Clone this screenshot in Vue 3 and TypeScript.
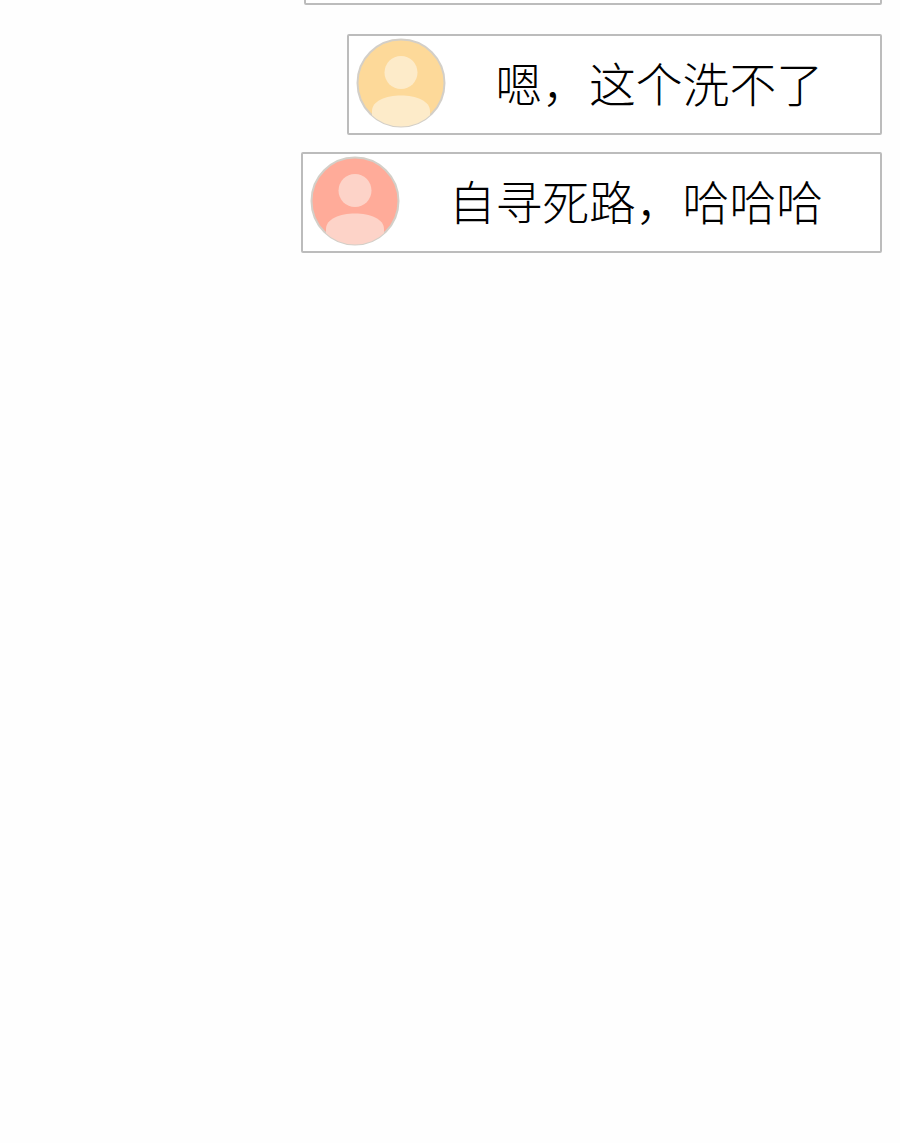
<script setup lang="ts">
interface Comment {
  id: number;
  text: string;
  tone: "yellow" | "red";
}

const comments: Comment[] = [
  { id: 1, text: "嗯，这个洗不了", tone: "yellow" },
  { id: 2, text: "自寻死路，哈哈哈", tone: "red" },
];
</script>

<template>
  <main class="page">
    <div class="bubble bubble--clipped"></div>
    <div v-for="comment in comments" :key="comment.id" class="bubble">
      <svg class="avatar" :class="`avatar--${comment.tone}`" viewBox="0 0 90 90" aria-hidden="true">
        <defs>
          <clipPath :id="`clip-${comment.id}`">
            <circle cx="45" cy="45" r="43.5" />
          </clipPath>
        </defs>
        <circle class="avatar__bg" cx="45" cy="45" r="43.5" />
        <g class="avatar__person" :clip-path="`url(#clip-${comment.id})`">
          <circle cx="45" cy="34.5" r="16.5" />
          <path d="M16 73C16 63 30 57.5 45 57.5C60 57.5 74 63 74 73L74 90L16 90Z" />
        </g>
      </svg>
      <span class="bubble__text">{{ comment.text }}</span>
    </div>
  </main>
</template>

<style>
html,
body {
  margin: 0;
  background: #fefefe;
}
</style>

<style scoped>
.page {
  height: 1143px;
  box-sizing: border-box;
  overflow: hidden;
  padding-right: 18px;
  display: flex;
  flex-direction: column;
  align-items: flex-end;
  gap: 17px;
  background: #fefefe;
}

.bubble {
  display: flex;
  align-items: center;
  gap: 49px;
  height: 101px;
  box-sizing: border-box;
  padding: 0 57px 3px 7px;
  border: 2px solid #bcbcbc;
  border-radius: 2px;
  background: #fff;
  flex-shrink: 0;
}

.bubble--clipped {
  width: 578px;
  margin-top: -96px;
  margin-bottom: 12px;
}

.avatar {
  width: 90px;
  height: 90px;
  flex-shrink: 0;
}

.avatar__bg {
  stroke: #d3cfc8;
  stroke-width: 2;
}

.avatar--yellow .avatar__bg {
  fill: #fdd999;
}

.avatar--yellow .avatar__person {
  fill: #fdebc9;
}

.avatar--red .avatar__bg {
  fill: #ffab99;
}

.avatar--red .avatar__person {
  fill: #fdd3c8;
}

.bubble__text {
  padding-bottom: 1px;
  font-family: "Noto Sans CJK SC", sans-serif;
  font-size: 46.8px;
  font-weight: 300;
  line-height: 1;
  color: #000;
  white-space: nowrap;
}
</style>
